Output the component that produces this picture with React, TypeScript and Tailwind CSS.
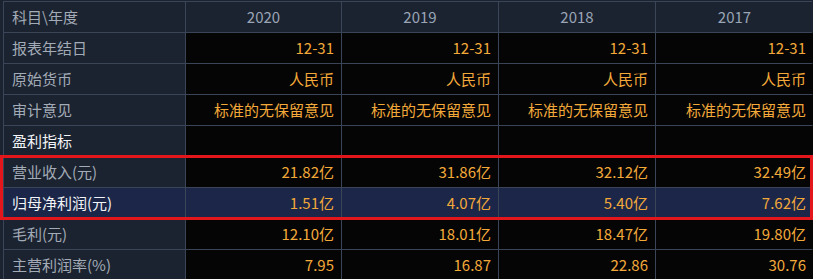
import React from 'react';

const years = ['2020', '2019', '2018', '2017'];

type Row = { label: string; values: string[]; strong?: boolean };

const topRows: Row[] = [
  { label: '报表年结日', values: ['12-31', '12-31', '12-31', '12-31'] },
  { label: '原始货币', values: ['人民币', '人民币', '人民币', '人民币'] },
  { label: '审计意见', values: ['标准的无保留意见', '标准的无保留意见', '标准的无保留意见', '标准的无保留意见'] },
  { label: '盈利指标', values: ['', '', '', ''], strong: true },
];

const redRows: Row[] = [
  { label: '营业收入(元)', values: ['21.82亿', '31.86亿', '32.12亿', '32.49亿'] },
  { label: '归母净利润(元)', values: ['1.51亿', '4.07亿', '5.40亿', '7.62亿'], strong: true },
];

const bottomRows: Row[] = [
  { label: '毛利(元)', values: ['12.10亿', '18.01亿', '18.47亿', '19.80亿'] },
  { label: '主营利润率(%)', values: ['7.95', '16.87', '22.86', '30.76'] },
];

const cols = 'grid grid-cols-[182px_156px_157px_157px_157px]';

function DataRow({ row, selected }: { row: Row; selected?: boolean }) {
  return (
    <div className={`${cols} h-[31px] border-b border-[#3a4558]`}>
      <div
        className={`flex items-center border-r border-[#3a4558] pl-[8px] text-[15px] ${
          selected ? 'bg-[#1b2648]' : 'bg-[#1b2330]'
        } ${row.strong ? 'text-[#f2f4f7]' : 'text-[#a3abb6]'}`}
      >
        {row.label}
      </div>
      {row.values.map((v, i) => (
        <div
          key={i}
          className={`flex items-center justify-end pr-[7px] text-[15px] text-[#f3a93a] ${
            i < 3 ? 'border-r border-[#3a4558]' : ''
          } ${selected ? 'bg-[#1b2648]' : row.strong ? 'bg-[#050505]' : 'bg-[#050505]'}`}
        >
          {v}
        </div>
      ))}
    </div>
  );
}

export default function App() {
  return (
    <div
      className="h-[279px] w-[813px] overflow-hidden bg-[#1b2330] pl-[3px] pt-[1px]"
      style={{ fontFamily: '"Noto Sans CJK SC", "Noto Sans", sans-serif' }}
    >
      <div className="w-[809px] border-l border-t border-[#3a4558]">
        <div className={`${cols} h-[31px] border-b border-[#3a4558] bg-[#1b2330]`}>
          <div className="flex items-center border-r border-[#3a4558] pl-[8px] text-[15px] text-[#a3abb6]">
            科目\年度
          </div>
          {years.map((y, i) => (
            <div
              key={y}
              className={`flex items-center justify-center text-[15px] text-[#9aa5b6] ${
                i < 3 ? 'border-r border-[#3a4558]' : ''
              }`}
            >
              {y}
            </div>
          ))}
        </div>
        {topRows.map((r) => (
          <DataRow key={r.label} row={r} />
        ))}
        <div className="relative">
          {redRows.map((r) => (
            <DataRow key={r.label} row={r} selected={r.strong} />
          ))}
          <div className="pointer-events-none absolute -top-[2px] -left-[4px] right-[-1px] bottom-[-1px] border-[3px] border-[#e3161b]" />
        </div>
        {bottomRows.map((r) => (
          <DataRow key={r.label} row={r} />
        ))}
      </div>
    </div>
  );
}
